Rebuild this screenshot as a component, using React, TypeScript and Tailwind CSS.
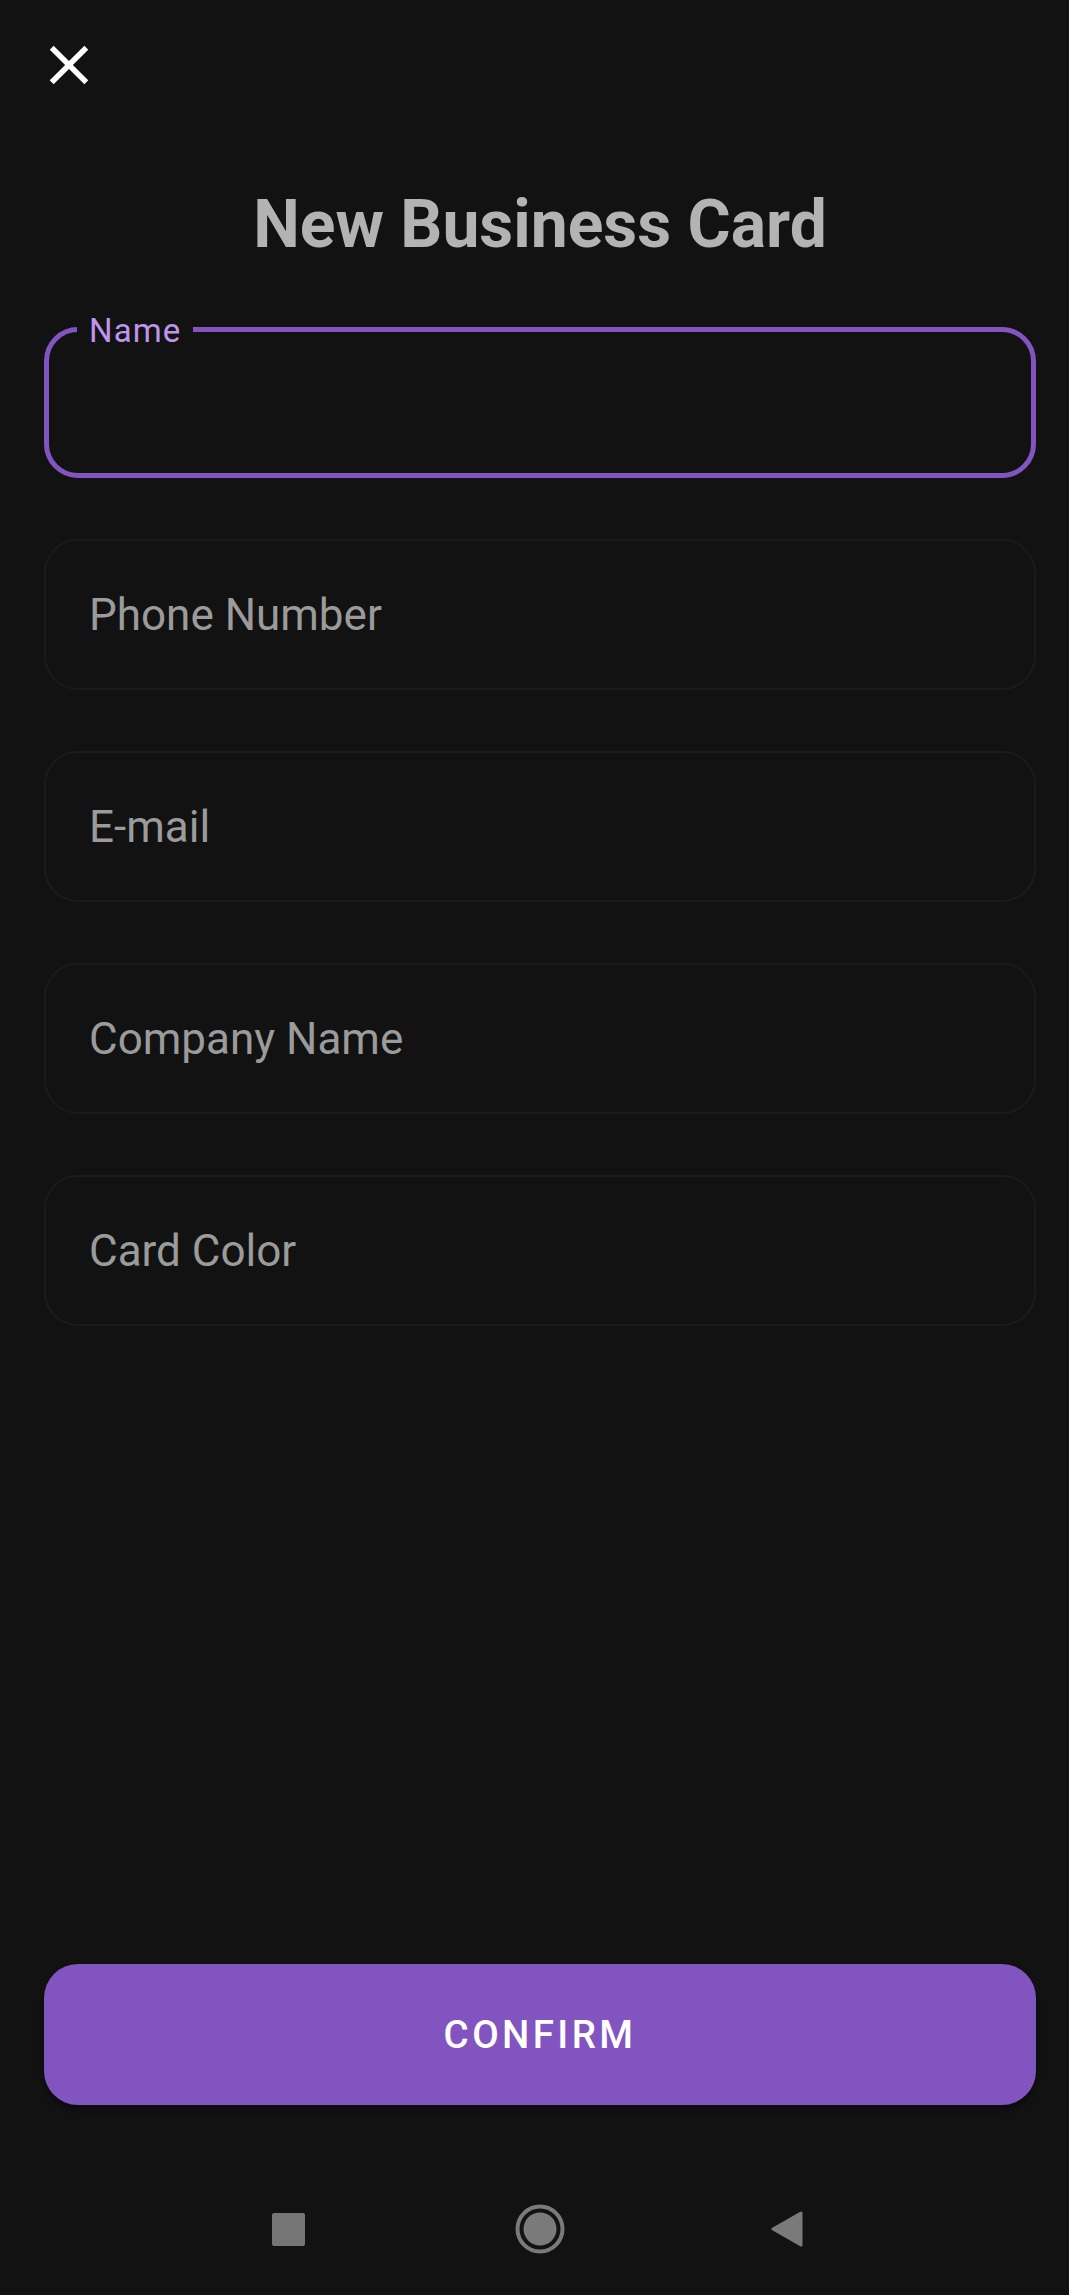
import React from "react";

const fields = ["Phone Number", "E-mail", "Company Name", "Card Color"];

const CloseIcon: React.FC = () => (
  <svg width="66" height="66" viewBox="0 0 24 24" fill="#ffffff">
    <path d="M19 6.41L17.59 5 12 10.59 6.41 5 5 6.41 10.59 12 5 17.59 6.41 19 12 13.41 17.59 19 19 17.59 13.41 12z" />
  </svg>
);

const NameField: React.FC = () => (
  <div className="relative h-[151px] rounded-[34px] border-[5px] border-[#8254c0]">
    <span className="absolute left-[28px] top-[-18px] bg-[#121212] px-[12px] text-[33px] leading-[33px] tracking-[1.1px] text-[#bf94ec]">
      Name
    </span>
  </div>
);

const PlainField: React.FC<{label: string}> = ({label}) => (
  <div className="flex h-[151px] items-center rounded-[34px] border-[2px] border-[#1b1b1b] pl-[43px]">
    <span className="text-[44px] leading-none text-[#9b9b9b]">{label}</span>
  </div>
);

const NavBar: React.FC = () => (
  <div className="flex h-[132px] shrink-0 items-center justify-center">
    <div className="flex w-[252px] justify-center">
      <div className="h-[33px] w-[33px] rounded-[2px] bg-[#757575]" />
    </div>
    <div className="flex w-[252px] justify-center">
      <svg width="50" height="50" viewBox="0 0 50 50">
        <circle cx="25" cy="25" r="22.5" fill="none" stroke="#7a7a7a" strokeWidth="4" />
        <circle cx="25" cy="25" r="16.5" fill="#7a7a7a" />
      </svg>
    </div>
    <div className="flex w-[252px] justify-center">
      <svg width="32" height="36" viewBox="0 0 32 36" className="mr-[10px]">
        <path
          d="M2 18 L30 2 L30 34 Z"
          fill="#7a7a7a"
          stroke="#7a7a7a"
          strokeWidth="3"
          strokeLinejoin="round"
        />
      </svg>
    </div>
  </div>
);

export default function App() {
  return (
    <div
      className="h-screen w-full overflow-hidden bg-[#121212]"
      style={{fontFamily: "Roboto, 'Liberation Sans', sans-serif"}}
    >
      {/* screen is 1080 wide, shot is cropped at the right */}
      <div className="flex h-full w-[1080px] flex-col">
        <div className="shrink-0 pl-[36px] pt-[32px]">
          <CloseIcon />
        </div>

        <h1 className="mt-[87px] shrink-0 text-center text-[66px] font-bold leading-[80px] text-[#b3b3b3]">
          New Business Card
        </h1>

        <div className="mx-[44px] mt-[62px] flex shrink-0 flex-col gap-[61px]">
          <NameField />
          {fields.map((f) => (
            <PlainField key={f} label={f} />
          ))}
        </div>

        <div className="flex-1" />

        <button className="mx-[44px] h-[141px] shrink-0 rounded-[34px] bg-[#8254c0] text-[38.5px] font-medium tracking-[3.4px] text-white shadow-[0_4px_6px_rgba(0,0,0,0.45)]">
          CONFIRM
        </button>

        <div className="h-[58px] shrink-0" />

        <NavBar />
      </div>
    </div>
  );
}
